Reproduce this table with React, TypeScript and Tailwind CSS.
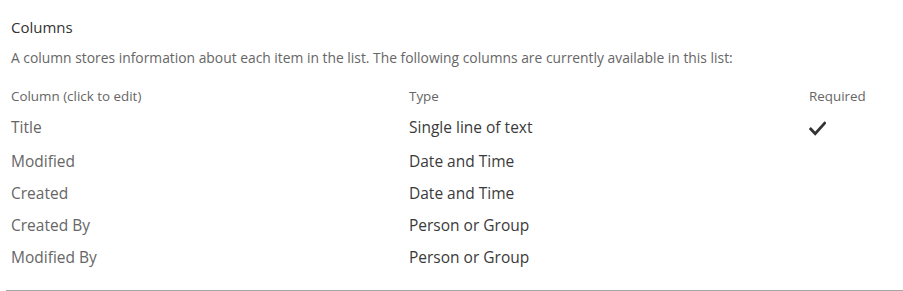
import React from "react";

type Field = { name: string; type: string; required?: boolean };

const fields: Field[] = [
  { name: "Title", type: "Single line of text", required: true },
  { name: "Modified", type: "Date and Time" },
  { name: "Created", type: "Date and Time" },
  { name: "Created By", type: "Person or Group" },
  { name: "Modified By", type: "Person or Group" },
];

function Check() {
  return (
    <svg width="17" height="15" viewBox="0 0 17 15" aria-hidden="true">
      <path d="M1.8 8 L6.2 12.6 L15.6 2.2" fill="none" stroke="#333" strokeWidth="2.8" strokeLinecap="square" />
    </svg>
  );
}

export default function App() {
  return (
    <div
      className="w-[903px] h-[291px] bg-white overflow-hidden"
      style={{ fontFamily: '"Open Sans", "Noto Sans", sans-serif' }}
    >
      <div className="pl-[11px] pt-[17px]">
        <h2 className="text-[15px] leading-[20px] text-[#333]">Columns</h2>
        <p className="mt-[11px] text-[13.85px] leading-[20px] text-[#666]">
          A column stores information about each item in the list. The following columns are currently available in this list:
        </p>
        <div className="mt-[19px] grid grid-cols-[398px_400px_1fr] text-[13.4px] leading-[18px] text-[#666]">
          <div>Column (click to edit)</div>
          <div>Type</div>
          <div>Required</div>
        </div>
        <div className="mt-[5px] flex flex-col">
          {fields.map((f, i) => (
            <div
              key={f.name}
              className={`grid grid-cols-[398px_400px_1fr] items-center ${i === 0 ? "h-[36px]" : "h-[32px]"}`}
            >
              <span className="text-[15.5px] text-[#666]">{f.name}</span>
              <span className="text-[15.5px] text-[#3a3a3a]">{f.type}</span>
              <span className="flex items-center">{f.required ? <Check /> : null}</span>
            </div>
          ))}
        </div>
      </div>
      <div className="mt-[16px] ml-[6px] h-px bg-[#a6a6a6]" />
    </div>
  );
}
